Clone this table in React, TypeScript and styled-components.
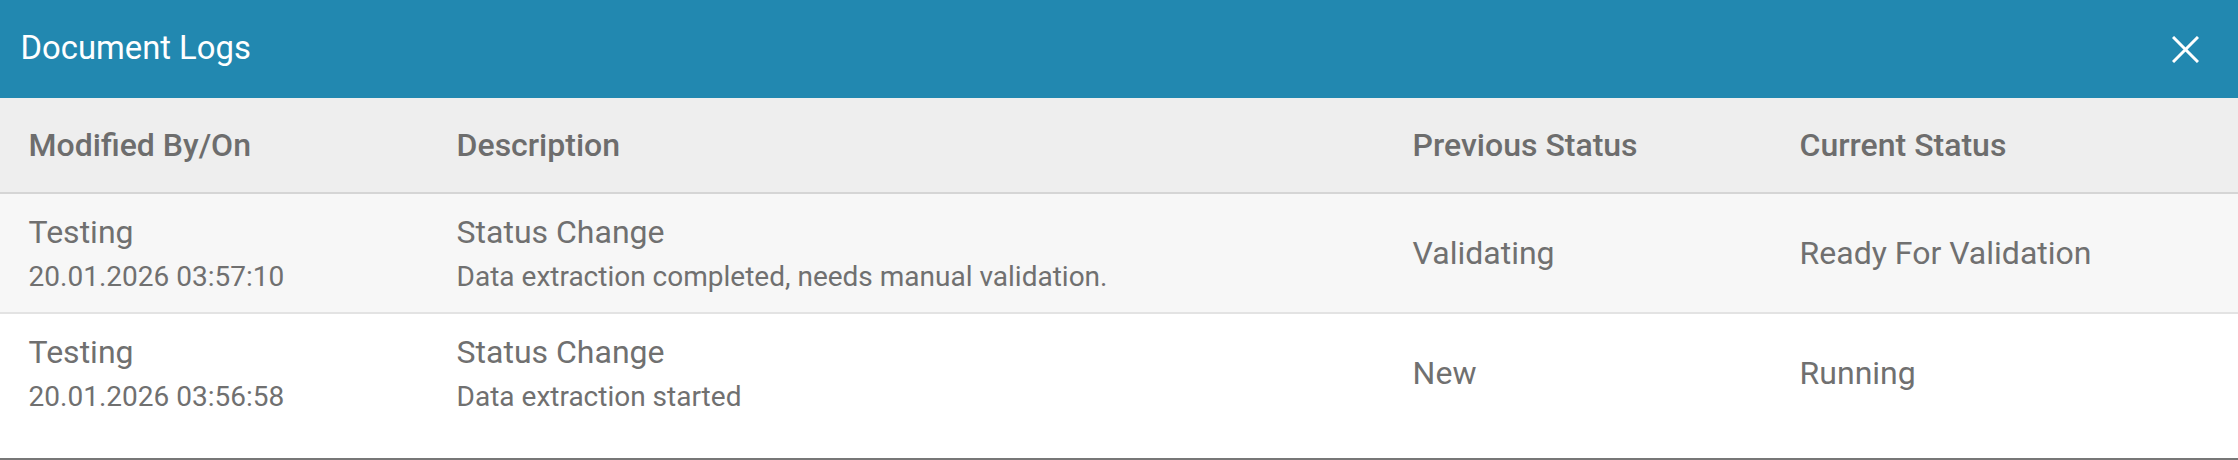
import React from "react";
import styled, { createGlobalStyle } from "styled-components";

const GlobalStyle = createGlobalStyle`
  html, body { margin: 0; padding: 0; background: #ffffff; }
  body { font-family: Roboto, "Noto Sans", "Liberation Sans", sans-serif; }
  * { box-sizing: border-box; }
`;

const Modal = styled.div`
  width: 2238px;
  height: 460px;
  display: flex;
  flex-direction: column;
  background: #ffffff;
  border-bottom: 2px solid #777777;
`;

const TitleBar = styled.header`
  height: 98px;
  flex: none;
  display: flex;
  align-items: center;
  justify-content: space-between;
  padding: 0 39px 0 20.5px;
  background: #2288b0;
`;

const Title = styled.h1`
  margin: 0;
  font-size: 32.8px;
  font-weight: 400;
  line-height: 1.5;
  color: #ffffff;
`;

const CloseButton = styled.button`
  width: 27px;
  height: 27px;
  padding: 0;
  border: 0;
  background: transparent;
  display: flex;
  cursor: pointer;
`;

const cols = "428px 956px 387px 1fr";

const HeadRow = styled.div`
  height: 96px;
  flex: none;
  display: grid;
  grid-template-columns: ${cols};
  align-items: center;
  background: #eeeeee;
  border-bottom: 2px solid #d5d5d5;
`;

const HeadCell = styled.div`
  padding: 0 30px 0 28.6px;
  font-size: 32px;
  font-weight: 500;
  line-height: 1.5;
  color: #6d6d6d;
`;

const Row = styled.div<{ $striped?: boolean }>`
  height: 120px;
  flex: none;
  display: grid;
  grid-template-columns: ${cols};
  align-items: center;
  background: ${(p) => (p.$striped ? "#f7f7f7" : "#ffffff")};
  border-bottom: 2px solid ${(p) => (p.$striped ? "#e3e3e3" : "transparent")};
`;

const Cell = styled.div`
  padding: 0 30px 0 28.6px;
  display: flex;
  flex-direction: column;
  color: #707070;
`;

const Primary = styled.span`
  font-size: 32px;
  line-height: 48px;
`;

const Secondary = styled.span`
  font-size: 28px;
  line-height: 42px;
`;

const Filler = styled.div`
  flex: 1;
`;

type Log = {
  user: string;
  date: string;
  title: string;
  detail: string;
  prev: string;
  curr: string;
};

const logs: Log[] = [
  {
    user: "Testing",
    date: "20.01.2026 03:57:10",
    title: "Status Change",
    detail: "Data extraction completed, needs manual validation.",
    prev: "Validating",
    curr: "Ready For Validation",
  },
  {
    user: "Testing",
    date: "20.01.2026 03:56:58",
    title: "Status Change",
    detail: "Data extraction started",
    prev: "New",
    curr: "Running",
  },
];

const CloseIcon = () => (
  <svg width="27" height="27" viewBox="0 0 27 27">
    <path d="M1 1 L26 26 M26 1 L1 26" stroke="#ffffff" strokeWidth="3" fill="none" />
  </svg>
);

export default function App() {
  return (
    <>
      <GlobalStyle />
      <Modal>
        <TitleBar>
          <Title>Document Logs</Title>
          <CloseButton aria-label="Close">
            <CloseIcon />
          </CloseButton>
        </TitleBar>
        <HeadRow>
          <HeadCell>Modified By/On</HeadCell>
          <HeadCell>Description</HeadCell>
          <HeadCell>Previous Status</HeadCell>
          <HeadCell>Current Status</HeadCell>
        </HeadRow>
        {logs.map((l, i) => (
          <Row key={i} $striped={i % 2 === 0}>
            <Cell>
              <Primary>{l.user}</Primary>
              <Secondary>{l.date}</Secondary>
            </Cell>
            <Cell>
              <Primary>{l.title}</Primary>
              <Secondary>{l.detail}</Secondary>
            </Cell>
            <Cell>
              <Primary>{l.prev}</Primary>
            </Cell>
            <Cell>
              <Primary>{l.curr}</Primary>
            </Cell>
          </Row>
        ))}
        <Filler />
      </Modal>
    </>
  );
}
